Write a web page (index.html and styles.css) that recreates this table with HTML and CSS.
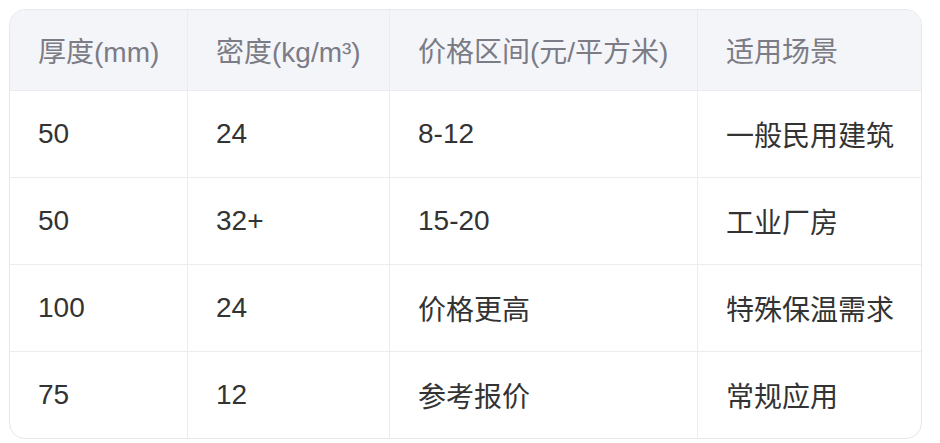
FILE: index.html
```html
<!DOCTYPE html>
<html lang="zh">
<head>
<meta charset="utf-8">
<link rel="stylesheet" href="styles.css">
</head>
<body>
<div class="table-wrap">
  <table class="spec-table">
    <colgroup>
      <col class="c1"><col class="c2"><col class="c3"><col class="c4">
    </colgroup>
    <thead>
      <tr><th>厚度(mm)</th><th>密度(kg/m³)</th><th>价格区间(元/平方米)</th><th>适用场景</th></tr>
    </thead>
    <tbody>
      <tr><td>50</td><td>24</td><td>8-12</td><td>一般民用建筑</td></tr>
      <tr><td>50</td><td>32+</td><td>15-20</td><td>工业厂房</td></tr>
      <tr><td>100</td><td>24</td><td>价格更高</td><td>特殊保温需求</td></tr>
      <tr><td>75</td><td>12</td><td>参考报价</td><td>常规应用</td></tr>
    </tbody>
  </table>
</div>
</body>
</html>
```

FILE: styles.css
```css
html, body {
  margin: 0;
  background: #ffffff;
}
body {
  padding: 9px;
  font-family: "Liberation Sans", Arial, "Noto Sans CJK SC", sans-serif;
}
.table-wrap {
  width: 911px;
  border: 1px solid #e6e7eb;
  border-radius: 16px;
  overflow: hidden;
}
.spec-table {
  width: 911px;
  table-layout: fixed;
  border-collapse: separate;
  border-spacing: 0;
  font-size: 28px;
}
.c1 { width: 178px; }
.c2 { width: 202px; }
.c3 { width: 308px; }
.c4 { width: 223px; }
.spec-table th,
.spec-table td {
  text-align: left;
  padding: 0 0 0 28px;
  border-right: 1px solid #ececee;
  border-bottom: 1px solid #ececee;
  white-space: nowrap;
  box-sizing: border-box;
}
.spec-table th:last-child,
.spec-table td:last-child {
  border-right: none;
}
.spec-table tbody tr:last-child td {
  border-bottom: none;
}
.spec-table th {
  height: 81px;
  background: #f4f5f9;
  color: #7b7c86;
  font-weight: normal;
}
.spec-table td {
  height: 87px;
  color: #333333;
}
.spec-table tbody tr:last-child td {
  height: 86px;
}
```
